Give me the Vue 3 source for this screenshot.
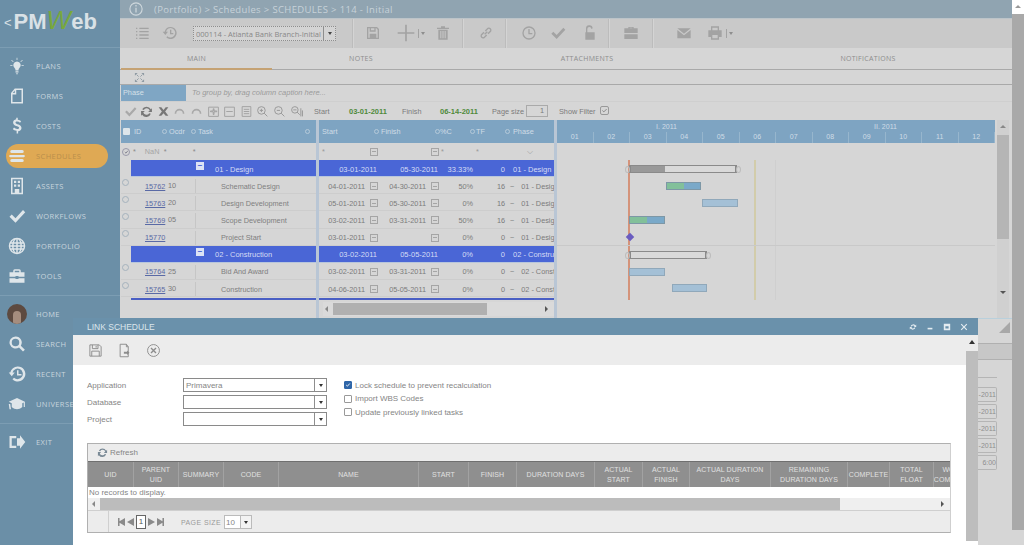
<script setup>
const nav = [
  { label: 'PLANS', d: 'M12 6a5 5 0 0 0-3 9c1 1 1 2 1 3h4c0-1 0-2 1-3a5 5 0 0 0-3-9zM10 19h4v1.500h-4zM11 21.500h2V23h-2zM11.500 1h1v3h-1zM3 10.500h3v1H3zM18 10.500h3v1h-3zM5 4l2.500 2-.7.700L4.300 4.700zM19 4l-2.500 2 .7.700 2.500-2z' },
  { label: 'FORMS', d: 'M9 2h11v20H4V8zM9 4.500 6.500 8H9zM11 4v6H6v10h12V4z' },
  { label: 'COSTS', d: 'M11 1h2v2.500c2 .2 3.500 1 4.500 2l-1.500 2c-1-.9-2.300-1.500-3.800-1.500-1.400 0-2.200.6-2.200 1.500 0 2.500 8 1.500 8 7 0 2.500-2 4-4.500 4.400V22h-2v-3.600c-2.200-.2-4-1.200-5-2.400l1.600-1.900c1 1 2.500 1.900 4.200 1.900 1.500 0 2.500-.7 2.500-1.700 0-2.700-8-1.500-8-7 0-2.300 1.800-3.800 4.200-4.200z' },
  { label: 'SCHEDULES', active: true, d: 'M5 4h14a2 2 0 0 1 0 4H5a2 2 0 0 1 0-4zM3 10.500h18a1.500 1.500 0 0 1 0 3H3a1.500 1.500 0 0 1 0-3zM5 16h14a2 2 0 0 1 0 4H5a2 2 0 0 1 0-4z' },
  { label: 'ASSETS', d: 'M4 1h16v22H4zM6 3v18h12V3zM8 5h3v3H8zM13 5h3v3h-3zM8 10h3v3H8zM13 10h3v3h-3zM9 16h6v5H9z' },
  { label: 'WORKFLOWS', d: 'M2 13l3-3 5 5L20 4l3 3-13 14z' },
  { label: 'PORTFOLIO', d: 'M12 1a11 11 0 1 0 0 22 11 11 0 0 0 0-22zM11 3v4H8c.6-2 1.700-3.500 3-4zM13 3c1.300.5 2.400 2 3 4h-3zM6 7H4.500A9 9 0 0 1 8 3.700C7 5 6.400 6 6 7zM18 7c-.4-1-1-2-2-3.300A9 9 0 0 1 19.500 7zM3.500 9h2.200L5.500 11H3zM7.700 9H11v2H7.500zM13 9h3.300l.2 2H13zM18.300 9h2.200l.5 2h-2.500zM3 13h2.500l.2 2H3.500zM7.500 13H11v2H7.700zM13 13h3.500l-.2 2H13zM18.500 13H21l-.5 2h-2.200zM4.500 17H6c.4 1 1 2 2 3.300A9 9 0 0 1 4.500 17zM8 17h3v4c-1.300-.5-2.400-2-3-4zM13 17h3c-.6 2-1.700 3.500-3 4zM18 17h1.500a9 9 0 0 1-3.500 3.300c1-1.300 1.600-2.300 2-3.300z' },
  { label: 'TOOLS', d: 'M9 3h6a2 2 0 0 1 2 2v2h5v6h-8v-1h-4v1H2V7h5V5a2 2 0 0 1 2-2zM9 5v2h6V5zM2 15h8v1h4v-1h8v6H2z' },
  { divider: true },
  { label: 'HOME', avatar: true },
  { label: 'SEARCH', d: 'M10 2a8 8 0 1 0 4.700 14.500L20 22l2.500-2.500-5.400-5.300A8 8 0 0 0 10 2zm0 3a5 5 0 1 1 0 10 5 5 0 0 1 0-10z' },
  { label: 'RECENT', d: 'M13 2a10 10 0 1 1-7 17l2-2a7 7 0 1 0-2-7h3l-4 5-4-5h2A10 10 0 0 1 13 2zM12 7h2v5h4v2h-6z' },
  { label: 'UNIVERSE', d: 'M12 4 1 9l4 2v5c2 2 5 3 7 3s5-1 7-3v-5l2-1v6h1.500V9zM1 12l1 7h2l-1-7z' },
  { divider: true },
  { label: 'EXIT', d: 'M2 4h9v3H5v10h6v3H2zM12 7h4V3l7 9-7 9v-4h-4z' },
]

const rows = [
  { group: '01 - Design', s: '03-01-2011', f: '05-30-2011', p: '33.33%', t: '0', ph: '01 - Design' },
  { id: '15762', o: '10', task: 'Schematic Design', s: '04-01-2011', f: '04-30-2011', p: '50%', t: '16', ph: '01 - Desig' },
  { id: '15763', o: '20', task: 'Design Development', s: '05-01-2011', f: '05-30-2011', p: '0%', t: '16', ph: '01 - Desig' },
  { id: '15769', o: '05', task: 'Scope Development', s: '03-02-2011', f: '03-31-2011', p: '50%', t: '16', ph: '01 - Desig' },
  { id: '15770', o: '', task: 'Project Start', s: '03-01-2011', f: '', p: '0%', t: '0', ph: '01 - Desig' },
  { group: '02 - Construction', s: '03-02-2011', f: '05-05-2011', p: '0%', t: '0', ph: '02 - Constru' },
  { id: '15764', o: '25', task: 'Bid And Award', s: '03-02-2011', f: '03-31-2011', p: '0%', t: '0', ph: '02 - Const' },
  { id: '15765', o: '30', task: 'Construction', s: '04-06-2011', f: '05-05-2011', p: '0%', t: '0', ph: '02 - Const' },
]

const months = ['01', '02', '03', '04', '05', '06', '07', '08', '09', '10', '11', '12']

const bars = [
  { cls: 'summary', l: 72, t: 5, w: 108, prog: 33 },
  { cls: 'tbar', l: 109, t: 22, w: 35, prog: 50 },
  { cls: 'plain', l: 145, t: 39, w: 36 },
  { cls: 'tbar', l: 72, t: 56, w: 36, prog: 50 },
  { cls: 'summary', l: 72, t: 91, w: 78 },
  { cls: 'plain', l: 72, t: 108, w: 36 },
  { cls: 'plain', l: 115, t: 124, w: 35 },
]

const columns = [
  { t: 'UID', w: 46 }, { t: 'PARENT UID', w: 45 }, { t: 'SUMMARY', w: 45 }, { t: 'CODE', w: 55 },
  { t: 'NAME', w: 140 }, { t: 'START', w: 50 }, { t: 'FINISH', w: 48 }, { t: 'DURATION DAYS', w: 78 },
  { t: 'ACTUAL START', w: 48 }, { t: 'ACTUAL FINISH', w: 47 }, { t: 'ACTUAL DURATION DAYS', w: 81 },
  { t: 'REMAINING DURATION DAYS', w: 77 }, { t: 'COMPLETE', w: 42 }, { t: 'TOTAL FLOAT', w: 44 }, { t: 'WORK COMPLETE', w: 40 },
]

const dateStubs = ['-2011', '-2011', '-2011', '-2011', '6:00']
const selects = [
  { label: 'Application', value: 'Primavera' },
  { label: 'Database', value: '' },
  { label: 'Project', value: '' },
]
const checks = [
  { label: 'Lock schedule to prevent recalculation', on: true },
  { label: 'Import WBS Codes', on: false },
  { label: 'Update previously linked tasks', on: false },
]
</script>

<template>
  <div class="app">
    <aside class="sidebar">
      <div class="logo">
        <span class="back">&lt;</span>
        <span class="pm">PM</span><span class="w">W</span><span class="eb">eb</span>
      </div>
      <nav class="nav">
        <template v-for="(item, i) in nav" :key="i">
          <div v-if="item.divider" class="nav-div"></div>
          <div v-else class="nav-item" :class="{ active: item.active }">
            <span v-if="item.avatar" class="avatar"><span class="face"></span></span>
            <svg v-else class="nav-icon" viewBox="0 0 24 24"><path :d="item.d" fill-rule="evenodd" /></svg>
            <span class="nav-label">{{ item.label }}</span>
          </div>
        </template>
      </nav>
    </aside>

    <main class="main">
      <div class="crumb">
        <svg class="info" viewBox="0 0 16 16"><circle cx="8" cy="8" r="7" fill="none" stroke="#cfd8dd" stroke-width="1.300" /><path d="M7.300 3.500h1.400v1.500H7.300zM7.300 6.500h1.400V12H7.300z" fill="#cfd8dd" /></svg>
        <span>(Portfolio) &gt; Schedules &gt; SCHEDULES &gt; 114 - Initial</span>
      </div>

      <div class="toolbar">
        <svg class="tb t1" viewBox="0 0 24 24"><path d="M3 4h2v2H3zM8 4h14v2H8zM3 9h2v2H3zM8 9h14v2H8zM3 14h2v2H3zM8 14h14v2H8zM3 19h2v2H3zM8 19h14v2H8z" /></svg>
        <svg class="tb t2" viewBox="0 0 24 24"><path d="M13 3a9 9 0 1 1-6.500 15.300l1.500-1.500A7 7 0 1 0 6 10h3l-4 5-4-5h3a9 9 0 0 1 9-7zM12 7h2v5h3v2h-5z" /></svg>
        <div class="tb-select"><span>000114 - Atlanta Bank Branch-Initial</span><i class="sel-btn"><b class="caret"></b></i></div>
        <i class="sep s1"></i>
        <svg class="tb t3" viewBox="0 0 24 24"><path fill-rule="evenodd" d="M3 3h15l3 3v15H3zM5 5v14h14V7l-2-2h-1v5H7V5zm4 0v3h5V5zM7 13h10v6H7z" /></svg>
        <svg class="tb t4" viewBox="0 0 24 24"><path d="M11 2h2v9h9v2h-9v9h-2v-9H2v-2h9z" /></svg>
        <i class="mini-sep"></i><b class="caret c4"></b>
        <svg class="tb t5" viewBox="0 0 24 24"><path fill-rule="evenodd" d="M9 2h6v2h6v2H3V4h6zM5 7h14v15H5zM8 9v11h1.500V9zM11.200 9v11h1.600V9zM14.500 9v11H16V9z" /></svg>
        <i class="sep s2"></i>
        <svg class="tb t6" viewBox="0 0 24 24"><path fill="none" stroke="#a3a3a3" stroke-width="2" d="M10 14l4-4M9 11l-4 4a3 3 0 0 0 4 4l4-4M15 13l4-4a3 3 0 0 0-4-4l-4 4" /></svg>
        <i class="sep s3"></i>
        <svg class="tb t7" viewBox="0 0 24 24"><path fill-rule="evenodd" d="M12 2a10 10 0 1 0 0 20 10 10 0 0 0 0-20zm0 2a8 8 0 1 1 0 16 8 8 0 0 1 0-16zM11 6h2v6h4v2h-6z" /></svg>
        <svg class="tb t8" viewBox="0 0 24 24"><path d="M2 13l3-3 5 5L20 4l3 3-13 14z" /></svg>
        <svg class="tb t9" viewBox="0 0 24 24"><path fill-rule="evenodd" d="M6 11V6a5 5 0 0 1 10-1l-2 1a3 3 0 0 0-6 0v5h11v11H5V11z" /></svg>
        <i class="sep s4"></i>
        <svg class="tb t10" viewBox="0 0 24 24"><path fill-rule="evenodd" d="M8 5V3h8v2h6v7H2V5zm2 0h4V4h-4zM2 14h20v7H2z" /></svg>
        <i class="sep s5"></i>
        <svg class="tb t11" viewBox="0 0 24 24"><path d="M2 5h20L12 13zM2 7.500l10 8 10-8V20H2z" /></svg>
        <svg class="tb t12" viewBox="0 0 24 24"><path fill-rule="evenodd" d="M6 2h12v6h4v10h-4v4H6v-4H2V8h4zm2 2v4h8V4zM8 15v5h8v-5z" /></svg>
        <i class="mini-sep m2"></i><b class="caret c12"></b>
      </div>

      <div class="tabs">
        <span class="tab on">MAIN</span><span class="tab">NOTES</span><span class="tab">ATTACHMENTS</span><span class="tab">NOTIFICATIONS</span>
      </div>

      <div class="expand-row">
        <svg class="expand" viewBox="0 0 12 12"><path d="M1 1h3L1 4zM11 1v3L8 1zM1 11V8l3 3zM11 11H8l3-3z" fill="#8f9ba3" /><path d="M3 3l2 2M9 3L7 5M3 9l2-2M9 9L7 7" stroke="#8f9ba3" /></svg>
      </div>

      <div class="group-row"><span class="phase">Phase</span><em>To group by, drag column caption here...</em></div>

      <div class="grid-tools">
        <svg class="gt" viewBox="0 0 24 24"><path d="M2 13l3-3 5 5L20 4l3 3-13 14z" fill="#a9a9a9" /></svg>
        <svg class="gt" viewBox="0 0 24 24"><path d="M12 3a9 9 0 0 1 8 5l2-2v7h-7l3-3a6 6 0 0 0-11-1L4 8a9 9 0 0 1 8-5zM2 11h7l-3 3a6 6 0 0 0 11 1l3 1a9 9 0 0 1-16 2l-2 2z" fill="#777" /></svg>
        <svg class="gt" viewBox="0 0 24 24"><path d="M3 4h5l4 5 4-5h5l-6 8 6 8h-5l-4-5-4 5H3l6-8z" fill="#777" /></svg>
        <svg class="gt" viewBox="0 0 24 24"><path d="M3 16a9 9 0 0 1 18 0h-3a6 6 0 0 0-12 0z" fill="#a9a9a9" /></svg>
        <svg class="gt" viewBox="0 0 24 24"><path d="M3 16a9 9 0 0 1 18 0h-3a6 6 0 0 0-12 0z" fill="#a9a9a9" /></svg>
        <svg class="gt" viewBox="0 0 24 24"><path d="M3 4h18v17H3zM11.500 7v4h-5v1.500h5v5H13v-5h5V11h-5V7z" fill="none" stroke="#999" stroke-width="1.500" /></svg>
        <svg class="gt" viewBox="0 0 24 24"><path d="M3 4h18v17H3zM6 12h12" fill="none" stroke="#999" stroke-width="1.500" /></svg>
        <svg class="gt" viewBox="0 0 24 24"><path d="M4 3h16v18H4zM7 8h10M7 12h10M7 16h10" fill="none" stroke="#999" stroke-width="1.500" /></svg>
        <svg class="gt" viewBox="0 0 24 24"><path d="M10 3a7 7 0 1 0 0 14 7 7 0 0 0 0-14zM15 15l6 6M7 10h6M10 7v6" fill="none" stroke="#999" stroke-width="1.800" /></svg>
        <svg class="gt" viewBox="0 0 24 24"><path d="M10 3a7 7 0 1 0 0 14 7 7 0 0 0 0-14zM15 15l6 6M7 10h6" fill="none" stroke="#999" stroke-width="1.800" /></svg>
        <svg class="gt" viewBox="0 0 24 24"><path d="M9 3a6 6 0 1 0 0 12A6 6 0 0 0 9 3zM13 13l5 5M6 9h6M20 6v15M23 10v11" fill="none" stroke="#999" stroke-width="1.800" /></svg>
        <span class="lbl l-start">Start</span>
        <span class="date">03-01-2011</span>
        <span class="lbl l-fin">Finish</span>
        <span class="date d2">06-14-2011</span>
        <span class="lbl l-page">Page size</span>
        <span class="page-input">1</span>
        <span class="lbl l-filter">Show Filter</span>
        <span class="filter-check"><svg viewBox="0 0 10 10"><path d="M2 5l2 2 4-4" fill="none" stroke="#777" stroke-width="1.200" /></svg></span>
      </div>

      <div class="grid-wrap">
        <div class="pane left">
          <div class="head">
            <span class="head-check"></span>
            <span class="h-id">ID</span><span class="h-ord sort">Ocdr</span><span class="h-task sort">Task</span><i class="sort-end"></i>
          </div>
          <div class="filter">
            <span class="fil-mark"><svg viewBox="0 0 10 10"><path d="M3 5l2 2 3-4" fill="none" stroke="#667" stroke-width="1.200" /></svg></span>
            <span class="fil-star">*</span><span class="fil-nan">NaN</span><span class="fil-star fa">*</span><span class="fil-star fb">*</span>
          </div>
          <template v-for="(r, i) in rows" :key="i">
            <div v-if="r.group" class="row grp">
              <span class="tree"><b>−</b></span><span class="grp-name">{{ r.group }}</span>
            </div>
            <div v-else class="row">
              <span class="radio"></span>
              <a class="id">{{ r.id }}</a><span class="ord">{{ r.o }}</span><span class="task">{{ r.task }}</span>
            </div>
          </template>
          <div class="grp-cut"></div>
        </div>

        <div class="pane mid">
          <div class="head">
            <span class="hc c-s">Start</span><span class="hc c-f sort">Finish</span><span class="hc c-p sort">%C</span><span class="hc c-t sort">TF</span><span class="hc c-ph sort">Phase</span>
          </div>
          <div class="filter">
            <span class="fc c-s"><i class="star">*</i><i class="cal"></i></span><span class="fc c-f"><i class="cal"></i></span><span class="fc c-p"><i class="star">*</i></span><span class="fc c-t"><i class="star">*</i></span><span class="fc c-ph"><i class="chev">⌵</i></span>
          </div>
          <div v-for="(r, i) in rows" :key="i" class="row mrow" :class="{ grp: r.group }">
            <span class="mc c-s"><span>{{ r.s }}</span><i v-if="!r.group" class="cal"></i></span>
            <span class="mc c-f"><span>{{ r.f }}</span><i v-if="!r.group" class="cal"></i></span>
            <span class="mc c-p">{{ r.p }}</span>
            <span class="mc c-t">{{ r.t }}</span>
            <span class="mc c-ph"><i v-if="!r.group" class="dash">~</i>{{ r.ph }}</span>
          </div>
          <div class="grp-cut"></div>
          <div class="hscroll">
            <b class="arrow-l"></b><span class="thumb"></span><b class="arrow-r"></b>
          </div>
        </div>

        <div class="pane gantt">
          <div class="g-head">
            <div class="g-half"><span>I. 2011</span></div>
            <div class="g-half"><span>II. 2011</span></div>
            <div class="g-months"><span v-for="m in months" :key="m">{{ m }}</span></div>
          </div>
          <div class="g-filter"></div>
          <div class="g-body">
            <i class="vline now"></i><i class="vline tan"></i><i class="vline faint"></i><i class="hline"></i>
            <div v-for="(b, i) in bars" :key="i" class="bar" :class="b.cls" :style="{ left: b.l + 'px', top: b.t + 'px', width: b.w + 'px' }">
              <span v-if="b.prog" class="prog" :style="{ width: b.prog + '%' }"></span>
            </div>
            <i class="milestone"></i>
          </div>
        </div>

        <div class="vscroll">
          <b class="up"></b><span class="vthumb"></span><b class="down"></b>
        </div>
      </div>

      <div class="under">
        <svg class="resize" viewBox="0 0 10 10"><path d="M10 0v10H0z" fill="#a8a8a8" /></svg>
        <div class="u-band"></div>
        <div class="u-line"></div>
        <div class="stubs">
          <span v-for="(d, i) in dateStubs" :key="i">{{ d }}</span>
        </div>
      </div>
    </main>

    <div class="page-scroll"><b class="up2"></b><span></span></div>

    <section class="modal">
      <header class="m-title">
        <span>LINK SCHEDULE</span>
        <div class="m-win">
          <svg viewBox="0 0 10 10"><path d="M2 4a3.500 3.500 0 0 1 6-1l1-1v3H6l1-1a2 2 0 0 0-3.500.5zM8 6a3.500 3.500 0 0 1-6 1L1 8V5h3L3 6a2 2 0 0 0 3.500-.5z" /></svg>
          <svg viewBox="0 0 10 10"><path d="M2 6h6v2H2z" /></svg>
          <svg viewBox="0 0 10 10"><path fill-rule="evenodd" d="M1 1h8v8H1zm2 3v3h4V4z" /></svg>
          <svg viewBox="0 0 10 10"><path d="M1 2l1-1 3 3 3-3 1 1-3 3 3 3-1 1-3-3-3 3-1-1 3-3z" /></svg>
        </div>
      </header>
      <div class="m-content">
        <div class="m-main">
          <div class="m-tools">
            <svg viewBox="0 0 24 24"><path fill="none" stroke="#8c8c8c" stroke-width="1.500" d="M3 3h15l3 3v15H3zM7 3v6h9V3M6 21v-8h12v8M13 4.500v3" /></svg>
            <svg viewBox="0 0 24 24"><path fill="none" stroke="#8c8c8c" stroke-width="1.500" d="M15 2H5v20h13V6zM15 2v4h3" /><path d="M11 14h5v-2l4 3.500-4 3.500v-2h-5z" fill="#8c8c8c" /></svg>
            <svg viewBox="0 0 24 24"><circle cx="12" cy="12" r="9.500" fill="none" stroke="#8c8c8c" stroke-width="1.500" /><path d="M8 8l8 8M16 8l-8 8" stroke="#8c8c8c" stroke-width="2.200" /></svg>
          </div>
          <div class="form">
            <div class="form-col">
              <div v-for="s in selects" :key="s.label" class="f-row">
                <label>{{ s.label }}</label>
                <div class="select"><span>{{ s.value }}</span><i class="sel-btn"><b class="caret dark"></b></i></div>
              </div>
            </div>
            <div class="check-col">
              <div v-for="c in checks" :key="c.label" class="check">
                <span class="box" :class="{ on: c.on }"><svg v-if="c.on" viewBox="0 0 10 10"><path d="M2 5l2 2 4-4.500" fill="none" stroke="#fff" stroke-width="1.500" /></svg></span>
                <span>{{ c.label }}</span>
              </div>
            </div>
          </div>
          <div class="table">
            <div class="t-tools">
              <svg viewBox="0 0 24 24"><path d="M12 3a9 9 0 0 1 8 5l2-2v7h-7l3-3a6 6 0 0 0-11-1L4 8a9 9 0 0 1 8-5zM2 11h7l-3 3a6 6 0 0 0 11 1l3 1a9 9 0 0 1-16 2l-2 2z" fill="#7a8a96" /></svg>
              <span>Refresh</span>
            </div>
            <div class="t-head">
              <span v-for="c in columns" :key="c.t" class="t-col" :style="{ width: c.w + 'px' }">{{ c.t }}</span>
            </div>
            <div class="t-empty">No records to display.</div>
            <div class="t-scroll">
              <b class="arrow-l dk"></b><span class="t-thumb"></span><b class="arrow-r dk"></b>
            </div>
            <div class="t-pager">
              <div class="pg-gutter"></div>
              <div class="pg-nav">
                <i class="first"></i><i class="prev"></i><span class="pg-input">1</span><i class="next"></i><i class="last"></i>
              </div>
              <span class="pg-label">PAGE SIZE</span>
              <div class="pg-select"><span>10</span><i class="sel-btn"><b class="caret dark"></b></i></div>
            </div>
          </div>
        </div>
        <div class="m-scroll"><b class="up3"></b><span></span></div>
      </div>
    </section>
  </div>
</template>

<style>
html, body { margin: 0; padding: 0; background: #d6d6d6; }
</style>

<style scoped>
.app { position: relative; width: 1024px; height: 545px; overflow: hidden; display: flex; font-family: "Liberation Sans", "Open Sans", sans-serif; font-size: 7.300px; color: #7b7b7b; background: #d6d6d6; }
i, b { display: block; font-style: normal; }

/* sidebar */
.sidebar { width: 120px; flex: none; background: #6b8fa7; display: flex; flex-direction: column; }
.logo { height: 48px; box-sizing: border-box; border-bottom: 1px solid #7c9db3; display: flex; align-items: center; padding: 0 0 3px 4px; font-family: "Liberation Sans", sans-serif; font-weight: 700; font-size: 22px; color: #d9e1e6; letter-spacing: 0; }
.back { font-weight: 400; font-size: 13px; margin-right: 2px; }
.w { color: #78a83e; font-style: italic; font-size: 26px; font-weight: 400; margin-top: -4px; }
.nav { padding-top: 3px; display: flex; flex-direction: column; }
.nav-item { height: 30px; display: flex; align-items: center; padding-left: 8px; position: relative; }
.nav-icon { width: 18px; height: 18px; fill: #dfe6ea; flex: none; }
.nav-label { margin-left: 10px; font-family: "Open Sans", sans-serif; font-size: 7.500px; letter-spacing: .4px; color: #c8d5dd; }
.nav-item.active::before { content: ""; position: absolute; left: 6px; top: 3px; width: 102px; height: 24px; border-radius: 12px; background: #dfa954; }
.nav-item.active .nav-icon, .nav-item.active .nav-label { position: relative; }
.nav-item.active .nav-label { color: #b98f4c; }
.nav-div { height: 1px; background: #7c9db3; margin: 4px 0 3px; }
.avatar { width: 20px; height: 20px; border-radius: 50%; background: #5d4a40; margin-left: -1px; margin-right: -1px; display: flex; justify-content: center; align-items: flex-end; overflow: hidden; }
.face { width: 8px; height: 13px; border-radius: 4px 4px 2px 2px; background: #a58d7e; }

/* main */
.main { width: 892px; flex: none; display: flex; flex-direction: column; }
.crumb { height: 18px; background: #90a4b1; display: flex; align-items: center; padding-left: 9px; gap: 11px; color: #c7d2d9; font-family: "Open Sans", sans-serif; font-size: 9.500px; letter-spacing: .35px; }
.info { width: 14px; height: 14px; }
.toolbar { height: 30px; background: #c9c9c9; border-top: 1px solid #bcc4c9; box-sizing: border-box; position: relative; }
.tb { position: absolute; top: 6px; width: 16px; height: 16px; fill: #a3a3a3; }
.t1 { left: 14px; } .t2 { left: 42px; } .t3 { left: 245px; } .t4 { left: 276px; width: 20px; height: 20px; top: 4px; } .t5 { left: 315px; }
.t6 { left: 358px; } .t7 { left: 401px; } .t8 { left: 430px; } .t9 { left: 462px; } .t10 { left: 503px; } .t11 { left: 556px; } .t12 { left: 587px; }
.sep { position: absolute; top: 0; width: 1px; height: 29px; background: #bcbcbc; box-shadow: 1px 0 0 #d4d4d4; }
.s1 { left: 232px; } .s2 { left: 342px; } .s3 { left: 385px; } .s4 { left: 488px; } .s5 { left: 532px; }
.mini-sep { position: absolute; left: 298px; top: 10px; width: 1px; height: 9px; background: #a3a3a3; }
.mini-sep.m2 { left: 606px; }
.caret { width: 0; height: 0; border-left: 2.500px solid transparent; border-right: 2.500px solid transparent; border-top: 3px solid #8e8e8e; }
.caret.dark { border-top-color: #333; }
.c4 { position: absolute; left: 301px; top: 13px; }
.c12 { position: absolute; left: 609px; top: 13px; }
.tb-select { position: absolute; left: 73px; top: 7px; width: 143px; height: 15px; box-sizing: border-box; border: 1px dotted #8e8e8e; background: #d4d4d4; display: flex; align-items: center; font-family: "Open Sans", sans-serif; font-size: 7.500px; padding-left: 2px; color: #888; white-space: nowrap; overflow: hidden; }
.tb-select span { flex: 1; overflow: hidden; }
.sel-btn { width: 12px; height: 100%; flex: none; border-left: 1px solid #8e8e8e; display: flex; align-items: center; justify-content: center; box-sizing: border-box; }
.tb-select .caret { border-top-color: #444; }

.tabs { height: 22px; background: #d6d6d6; display: flex; border-bottom: 1px solid #a9a9a9; box-sizing: border-box; font-family: "Open Sans", sans-serif; }
.tab { text-align: center; line-height: 21px; color: #8d8d8d; font-size: 7px; letter-spacing: .3px; }
.tab:first-child { width: 151px; margin-left: 1px; height: 22px; box-sizing: border-box; border-bottom: 2px solid #c5a273; }
.tab:nth-child(2) { width: 178px; }
.tab:nth-child(3) { width: 274px; }
.tab:nth-child(4) { width: 288px; }
.expand-row { height: 15px; background: #d6d6d6; border-bottom: 1px solid #a9a9a9; box-sizing: border-box; padding-left: 14px; display: flex; align-items: center; }
.expand { width: 11px; height: 11px; }
.group-row { height: 17px; display: flex; align-items: stretch; border-bottom: 1px solid #cfcfcf; box-sizing: border-box; }
.phase { width: 65px; margin-left: 1px; background: #7fa6c4; color: #d5e0e8; line-height: 16px; padding-left: 2px; box-sizing: border-box; }
.group-row em { margin-left: 6px; line-height: 16px; color: #9a9a9a; font-size: 7.500px; }
.grid-tools { height: 18px; position: relative; display: flex; align-items: center; }
.gt { width: 13px; height: 13px; margin-left: 3.600px; flex: none; }
.lbl, .date, .page-input, .filter-check { position: absolute; top: 5px; white-space: nowrap; }
.l-start { left: 194px; } .date { left: 229px; color: #4f8a3c; font-weight: 700; font-size: 7.500px; } .date.d2 { left: 320px; } .l-fin { left: 282px; } .l-page { left: 372px; }
.page-input { left: 406px; top: 3px; width: 22px; height: 12px; border: 1px solid #aaa; box-sizing: border-box; text-align: right; padding-right: 3px; line-height: 10px; }
.l-filter { left: 439px; }
.filter-check { left: 480px; top: 4px; width: 9px; height: 9px; border: 1px solid #999; border-radius: 2px; box-sizing: border-box; }
.filter-check svg { display: block; width: 100%; height: 100%; }

/* grid */
.grid-wrap { height: 198px; display: flex; flex: none; }
.pane { flex: none; }
.left { width: 195px; margin-left: 1px; border-right: 3px solid #b9c6d5; }
.mid { width: 235px; border-right: 3px solid #b9c6d5; box-sizing: content-box; }
.gantt { width: 438px; }
.head { height: 23px; background: #7ea4c2; display: flex; align-items: center; position: relative; color: #cfdce6; }
.sort { position: relative; }
.sort::before, .sort-end { content: ""; position: absolute; width: 3px; height: 3px; border: 1px solid #b4c9d9; border-radius: 50%; top: 50%; margin-top: -2.500px; left: -7px; }
.sort-end { left: auto; right: 6px; }
.head-check { width: 7px; height: 7px; background: #dde5ea; margin-left: 2px; border-radius: 1px; }
.h-id { margin-left: 4px; width: 35px; } .h-ord { width: 29px; } .h-task { flex: 1; }
.filter { height: 17px; display: flex; align-items: center; position: relative; }
.fil-mark { width: 8px; height: 8px; border: 1px solid #99a; border-radius: 50%; margin-left: 1px; box-sizing: border-box; }
.fil-mark svg { display: block; width: 100%; height: 100%; }
.fil-star { margin-left: 3px; color: #8a8a8a; }
.fil-nan { margin-left: 9px; color: #a5a5a5; width: 16px; }
.fa { margin-left: 3px; } .fb { margin-left: 26px; }
.row { height: 17.150px; display: flex; align-items: center; border-bottom: 1px solid #cdcdcd; box-sizing: border-box; white-space: nowrap; overflow: hidden; padding-top: 2px; }
.row.grp { background: #4a66d6; color: #d5dcf5; border-bottom: 1px solid #b8c6dc; margin-left: 10px; }
.mrow.grp { margin-left: 0; }
.tree { width: 8px; height: 8px; background: #dde3f5; margin-left: 65px; margin-top: -6px; display: flex; align-items: center; justify-content: center; color: #4a66d6; font-size: 8px; line-height: 8px; }
.grp-name { margin-left: 11px; font-size: 7.500px; }
.radio { width: 7px; height: 7px; border: 1px solid #a5b2bd; border-radius: 50%; margin-left: 1px; margin-top: -8px; box-sizing: border-box; }
.id { width: 23px; margin-left: 16px; color: #5a6aa5; text-decoration: underline; flex: none; }
.ord { width: 28px; flex: none; height: 100%; line-height: 14px; border-right: 1px solid #c6c6c6; box-sizing: border-box; }
.task { margin-left: 25px; color: #808080; }
.grp-cut { height: 2px; background: #4a5fc4; margin-left: 10px; margin-top: 1px; }
.mid .grp-cut { margin-left: 0; }
.hc { flex: none; box-sizing: border-box; padding-left: 3px; }
.hc.c-f { padding-left: 3px; } .hc.c-p { padding-left: 1px; } .hc.c-t { padding-left: 2px; } .hc.c-ph { padding-left: 7px; }
.sort.hc::before { left: -4px; }
.hc.c-ph::before { left: -1px; }
.c-s { width: 59px; } .c-f { width: 61px; } .c-p { width: 35px; } .c-t { width: 32px; } .c-ph { width: 48px; }
.fc { display: flex; align-items: center; justify-content: flex-end; flex: none; box-sizing: border-box; color: #999; }
.fc .star { margin-right: auto; margin-left: 3px; }
.fc.c-p .star, .fc.c-t .star { margin-left: 2px; }
.fc.c-ph { justify-content: center; }
.chev { font-size: 8px; }
.mc { flex: none; white-space: nowrap; overflow: hidden; box-sizing: border-box; display: flex; align-items: center; justify-content: flex-end; }
.mc.c-s, .mc.c-f { gap: 5px; }
.mc.c-p { padding-right: 1px; } .mc.c-t { padding-right: 1px; }
.mc.c-ph { justify-content: flex-start; padding-left: 4px; }
.grp .mc { font-size: 7.500px; }
.grp .mc.c-s, .grp .mc.c-f { padding-right: 1px; }
.grp .mc.c-ph { padding-left: 7px; }
.dash { margin-right: 7px; }
.cal { width: 8px; height: 8px; border: 1px solid #a5a5a5; box-sizing: border-box; flex: none; background: linear-gradient(#a5a5a5, #a5a5a5) center/4px 1px no-repeat; }
.hscroll { height: 14px; margin-top: 2px; margin-left: 4px; background: #dadada; display: flex; align-items: center; position: relative; }
.arrow-l, .arrow-r { width: 0; height: 0; border-top: 3px solid transparent; border-bottom: 3px solid transparent; flex: none; }
.arrow-l { border-right: 3px solid #888; margin: 0 5px 0 2px; }
.arrow-r { border-left: 3px solid #555; margin: 0 6px 0 auto; }
.thumb { width: 154px; height: 12px; background: #b0b0b0; }

/* gantt */
.g-head { height: 23px; background: #7ea4c2; display: grid; grid-template-columns: 219px 219px; color: #cfdce6; font-size: 7px; }
.g-half { text-align: center; line-height: 13px; height: 10px; }
.g-months { grid-column: 1 / 3; display: grid; grid-template-columns: repeat(12, 1fr); line-height: 10px; }
.g-months span { text-align: center; border-right: 1px solid #97b6cd; }
.g-filter { height: 17px; }
.g-body { position: relative; height: 140px; }
.vline { position: absolute; top: 0; bottom: 0; width: 2px; }
.now { left: 71px; background: #d4937a; }
.tan { left: 197px; background: #d2ccaa; }
.faint { left: 218px; width: 1px; background: #cfcfcf; }
.hline { position: absolute; left: 0; right: 0; top: 85px; height: 1px; background: #c9c9c9; }
.bar { position: absolute; height: 8px; box-sizing: border-box; display: flex; }
.bar.summary { border: 1px solid #8a8a8a; background: #d9d9d9; border-left-width: 2px; border-right-width: 2px; }
.summary::before, .summary::after { content: ""; position: absolute; top: 0; width: 3px; height: 5px; border: 1px solid #bdbdbd; border-radius: 50%; }
.summary::before { left: -6px; }
.summary::after { right: -6px; }
.summary .prog { background: #999; }
.bar.tbar { background: #7aa9c9; border: 1px solid #7d97a6; }
.tbar .prog { background: #82c09a; }
.bar.plain { background: #a4c0d6; border: 1px solid #90a8ba; }
.milestone { position: absolute; left: 69.500px; top: 74px; width: 6px; height: 6px; background: #6a5cc0; transform: rotate(45deg); }
.vscroll { width: 12px; margin-left: 2px; background: #d0d0d0; position: relative; display: flex; flex-direction: column; align-items: center; }
.up { margin-top: 5px; width: 0; border-left: 3px solid transparent; border-right: 3px solid transparent; border-bottom: 3px solid #888; }
.vthumb { margin-top: 7px; height: 104px; width: 100%; background: #b5b5b5; }
.down { margin-top: auto; margin-bottom: 24px; width: 0; border-left: 3px solid transparent; border-right: 3px solid transparent; border-top: 3px solid #555; }

.under { flex: 1; background: #d6d6d6; border-top: 1px solid #b9d0dc; position: relative; display: flex; flex-direction: column; align-items: flex-end; padding-top: 24px; box-sizing: border-box; }
.resize { position: absolute; left: 879px; top: 3px; width: 11px; height: 11px; }
.u-band { width: 34px; height: 17px; background: #c7c7c7; border-top: 1px solid #b0b0b0; border-bottom: 1px solid #b0b0b0; box-sizing: border-box; }
.u-line { width: 34px; height: 1px; margin-top: 17px; background: linear-gradient(90deg, #b5b5b5 56%, transparent 56%); }
.stubs { width: 34px; margin-top: 9px; display: flex; flex-direction: column; gap: 2px; }
.stubs span { width: 19px; height: 15px; box-sizing: border-box; border: 1px solid #b5b5b5; border-left: 0; border-radius: 0 2px 2px 0; text-align: right; font-size: 7px; line-height: 13px; color: #8e8e8e; overflow: hidden; }

.page-scroll { width: 12px; flex: none; height: 530px; background: #a9a9a9; display: flex; flex-direction: column; }
.page-scroll b { height: 14px; box-sizing: border-box; background: #fff; position: relative; }
.up2::after { content: ""; position: absolute; left: 3px; top: 5px; border-left: 3px solid transparent; border-right: 3px solid transparent; border-bottom: 3px solid #999; }

/* modal */
.modal { position: absolute; left: 73px; top: 318px; width: 905px; height: 227px; display: flex; flex-direction: column; background: #fff; font-size: 8px; color: #858585; }
.m-title { height: 17px; flex: none; background: #6a91ab; display: flex; align-items: center; justify-content: space-between; padding: 0 10px 0 14px; color: #dbe6ec; font-size: 8.500px; }
.m-win { display: flex; gap: 9px; }
.m-win svg { width: 8px; height: 8px; fill: #e4ecf1; display: block; }
.m-content { flex: 1; display: flex; min-height: 0; }
.m-main { flex: 1; min-width: 0; }
.m-tools { height: 30px; background: #ececec; display: flex; align-items: center; gap: 14px; padding-left: 15px; box-sizing: border-box; }
.m-tools svg { width: 15px; height: 15px; }
.form { display: flex; padding: 13px 0 0 14px; height: 78px; box-sizing: border-box; }
.form-col { width: 257px; display: flex; flex-direction: column; gap: 3px; }
.f-row { display: flex; align-items: center; height: 14px; }
.f-row label { width: 96px; }
.select { width: 144px; height: 14px; box-sizing: border-box; border: 1px solid #8a8a8a; display: flex; align-items: center; padding-left: 2px; }
.select span { flex: 1; }
.check-col { display: flex; flex-direction: column; gap: 5.500px; padding-top: 3px; }
.check { display: flex; align-items: center; gap: 3px; height: 8px; }
.box { width: 8px; height: 8px; border: 1px solid #999; border-radius: 1px; box-sizing: border-box; background: #fff; }
.box.on { background: #2f66a8; border-color: #2f66a8; }
.box svg { display: block; width: 100%; height: 100%; }
.table { margin: 0 14px; border: 1px solid #b0b0b0; border-right: 1px solid #cfcfcf; overflow: hidden; width: 864px; box-sizing: border-box; height: 90px; }
.t-tools { height: 17px; background: #ececec; display: flex; align-items: center; padding-left: 9px; gap: 2px; }
.t-tools svg { width: 11px; height: 11px; }
.t-head { height: 26px; background: #8f8f8f; border-top: 1px solid #6f6f6f; box-sizing: border-box; display: flex; color: #e0e0e0; font-size: 7px; letter-spacing: .1px; overflow: hidden; }
.t-col { flex: none; box-sizing: border-box; display: flex; align-items: center; justify-content: center; text-align: center; line-height: 10px; border-right: 1px solid #a2a2a2; padding: 0 1px; overflow: hidden; }
.t-empty { height: 11px; line-height: 11px; padding-left: 1px; background: #fff; }
.t-scroll { height: 13px; background: #efefef; border-bottom: 1px solid #cfcfcf; display: flex; align-items: center; box-sizing: border-box; }
.arrow-l.dk { margin: 0 5px 0 4px; }
.t-thumb { width: 740px; height: 12px; background: #bcbcbc; }
.t-pager { height: 22px; background: #ececec; display: flex; align-items: center; }
.pg-gutter { width: 20px; height: 100%; border-right: 1px solid #d0d0d0; }
.pg-nav { display: flex; align-items: center; margin-left: 9px; gap: 2px; }
.pg-nav i { width: 7px; height: 8px; background: #8a8a8a; }
.first { clip-path: polygon(0 0, 22% 0, 22% 40%, 100% 0, 100% 100%, 22% 60%, 22% 100%, 0 100%); }
.prev { clip-path: polygon(100% 0, 100% 100%, 0 50%); }
.next { clip-path: polygon(0 0, 100% 50%, 0 100%); }
.last { clip-path: polygon(100% 0, 78% 0, 78% 40%, 0 0, 0 100%, 78% 60%, 78% 100%, 100% 100%); }
.pg-input { width: 10px; height: 14px; border: 1px solid #666; box-sizing: border-box; text-align: center; line-height: 12px; background: #fff; color: #555; }
.pg-label { margin-left: 17px; color: #9a9a9a; font-size: 7px; letter-spacing: .4px; }
.pg-select { margin-left: 3px; width: 28px; height: 14px; border: 1px solid #bbb; box-sizing: border-box; display: flex; align-items: center; padding-left: 1px; background: #fff; }
.pg-select span { flex: 1; }
.pg-select .sel-btn { border-left-color: #bbb; width: 11px; background: #f3f3f3; }
.m-scroll { width: 12px; flex: none; background: #fff; display: flex; flex-direction: column; }
.m-scroll b { height: 16px; position: relative; background: #ececec; }
.up3::after { content: ""; position: absolute; left: 3px; top: 5px; border-left: 3px solid transparent; border-right: 3px solid transparent; border-bottom: 4px solid #333; }
.m-scroll span { height: 190px; background: #bdbdbd; }
</style>
